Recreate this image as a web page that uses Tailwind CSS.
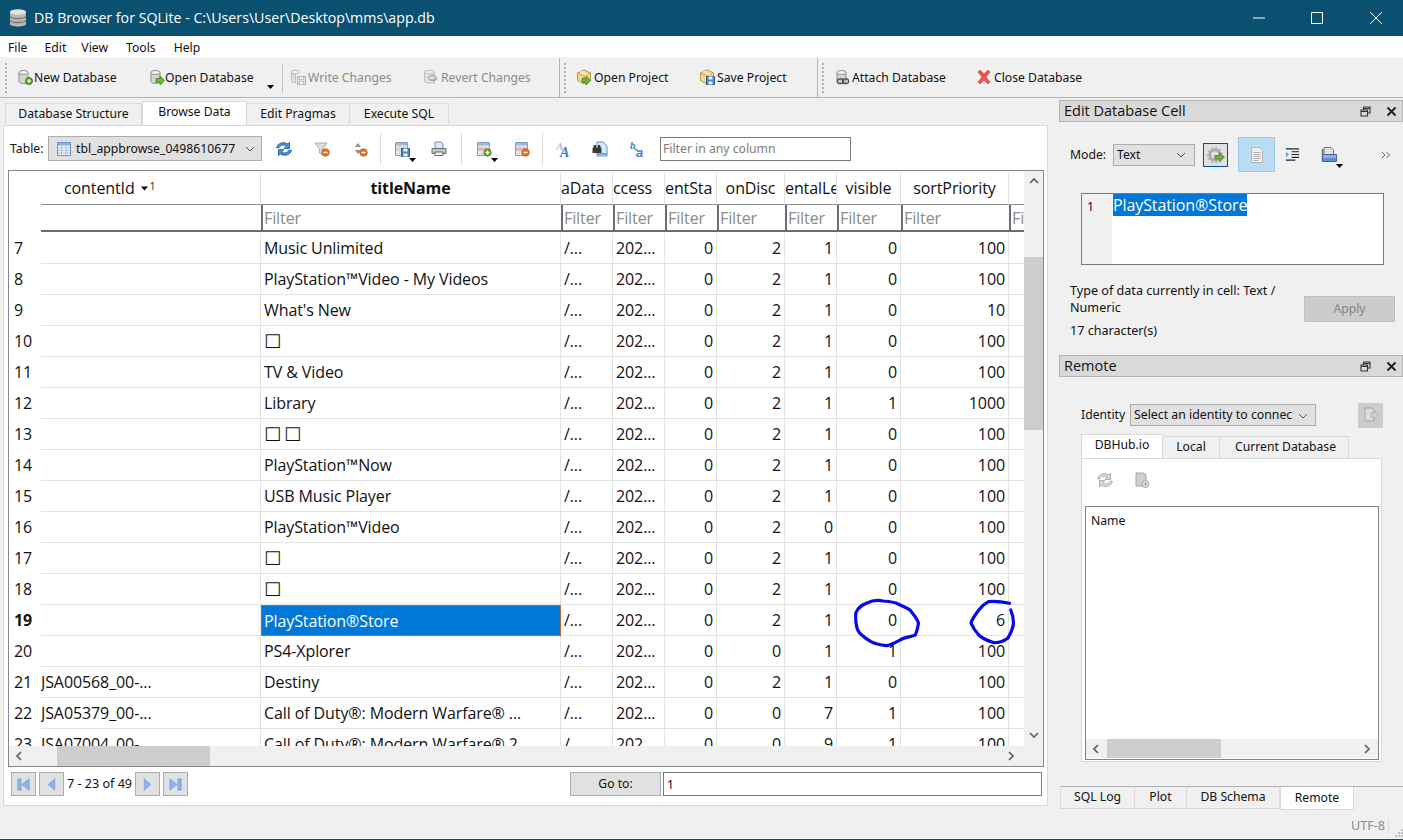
<!DOCTYPE html>
<html lang="en">
<head>
<meta charset="UTF-8">
<title>DB Browser for SQLite</title>
<script src="https://cdn.jsdelivr.net/npm/@tailwindcss/browser@4"></script>
</head>
<body class="bg-[#f0f0f0]">
<!-- shared icons -->
<svg class="hidden">
  <symbol id="db" viewBox="0 0 16 16"><path d="M2 3.5v9c0 1.2 2.2 2 4.5 2s4.500-.8 4.500-2v-9z" fill="#d4d4d4" stroke="#8d8d8d"/><ellipse cx="6.500" cy="3.500" rx="4.500" ry="2" fill="#f4f4f4" stroke="#8d8d8d"/></symbol>
  <symbol id="db-new" viewBox="0 0 16 16"><use href="#db"/><circle cx="12" cy="12" r="3.500" fill="#5ea52f" stroke="#3f7f1e"/><path d="M10 12h4M12 10v4" stroke="#fff" stroke-width="1.200"/></symbol>
  <symbol id="db-open" viewBox="0 0 16 16"><use href="#db"/><path d="M7 9.500h4V7l4.500 4.500L11 16v-2.500H7z" fill="#76b043" stroke="#3f7f1e" stroke-width=".8"/></symbol>
  <symbol id="db-write" viewBox="0 0 16 16"><path d="M1.500 3v9c0 1 1.800 1.800 4 1.800V3z" fill="#dedede" stroke="#bdbdbd"/><ellipse cx="5.500" cy="3" rx="4" ry="1.800" fill="#efefef" stroke="#bdbdbd"/><path d="M7.500 7.500h8v8h-8z" fill="#e2e2e2" stroke="#b0b0b0"/><path d="M9.500 7.500h4v3h-4zM9.500 12.500h4v3h-4z" fill="#f6f6f6" stroke="#b0b0b0" stroke-width=".7"/></symbol>
  <symbol id="db-revert" viewBox="0 0 16 16"><path d="M1.500 3v9c0 1 1.800 1.800 4 1.800h6V3z" fill="#e2e2e2" stroke="#bdbdbd"/><ellipse cx="6.500" cy="3" rx="5" ry="1.800" fill="#efefef" stroke="#bdbdbd"/><path d="M5 9c1-3 6-3 8-1M14 8.500c-1 3.500-6 3.500-8 1.500" fill="none" stroke="#a5a5a5" stroke-width="1.500"/></symbol>
  <symbol id="box" viewBox="0 0 16 16"><path d="M8 .8l6.500 3.200v7.500L8 15 1.500 11.500V4z" fill="#f5d98f" stroke="#c39a48"/><path d="M1.500 4L8 7.500 14.500 4M8 7.500V15" fill="none" stroke="#c39a48" stroke-width=".8"/><path d="M4.500 2.500l6.500 3.300" stroke="#fff2c8" stroke-width="1.500"/></symbol>
  <symbol id="proj-open" viewBox="0 0 16 16"><use href="#box"/><path d="M6 9.500h4V7l4.500 4.500L10 16v-2.500H6z" fill="#76b043" stroke="#3f7f1e" stroke-width=".8"/></symbol>
  <symbol id="proj-save" viewBox="0 0 16 16"><use href="#box"/><path d="M7.500 7.500h8v8h-8z" fill="#4f88c6" stroke="#2f5f95"/><path d="M9.500 7.500h4v3h-4zM9.500 12.500h4v3h-4z" fill="#f2f2f2"/></symbol>
  <symbol id="attach" viewBox="0 0 16 16"><use href="#db"/><rect x="2.500" y="10" width="6" height="4.500" rx="2" fill="none" stroke="#555" stroke-width="1.400"/><rect x="7.500" y="10" width="6" height="4.500" rx="2" fill="none" stroke="#555" stroke-width="1.400"/></symbol>
  <symbol id="close-x" viewBox="0 0 16 16"><path d="M2 3l2-2 4 4 4-4 2 2-4 5 4 5-2 2-4-4-4 4-2-2 4-5z" fill="#ef5350" stroke="#d93a36" stroke-width=".6"/></symbol>
  <symbol id="badge-minus" viewBox="0 0 16 16"><circle cx="11.500" cy="11.500" r="3.800" fill="#e8701f" stroke="#b94f10" stroke-width=".6"/><path d="M9.500 11.500h4" stroke="#fff" stroke-width="1.400"/></symbol>
  <symbol id="badge-plus" viewBox="0 0 16 16"><circle cx="11.500" cy="11.500" r="3.800" fill="#5ea52f" stroke="#3f7f1e" stroke-width=".6"/><path d="M9.500 11.500h4M11.500 9.500v4" stroke="#fff" stroke-width="1.300"/></symbol>
  <symbol id="grid-red" viewBox="0 0 16 16"><path d="M1.500 1.500h12v13h-12z" fill="#f4f7fb" stroke="#7f9dc4"/><path d="M2 2h11v2.500H2z" fill="#9cb9de"/><path d="M2 6.500h11v3H2z" fill="#f3a7a7"/><path d="M2 5h11M2 10h11M2 12.500h11M5.500 4v10M9.500 4v10" stroke="#b8c9de" stroke-width=".7"/></symbol>
  <symbol id="refresh" viewBox="1.500 2 13 12"><path d="M2 7c.5-3.500 5.500-5.500 9-3l1.500-1.500V7.500H8L10 5.500C7.500 4 5 5 4 7z" fill="#4b8fd8" stroke="#20609f" stroke-width=".7"/><path d="M14 9c-.5 3.500-5.500 5.500-9 3l-1.500 1.500V8.500H8L6 10.500C8.500 12 11 11 12 9z" fill="#4b8fd8" stroke="#20609f" stroke-width=".7"/></symbol>
  <symbol id="refresh-off" viewBox="1.500 2 13 12"><path d="M2 7c.5-3.500 5.500-5.500 9-3l1.500-1.500V7.500H8L10 5.500C7.500 4 5 5 4 7z" fill="#e0e0e0" stroke="#9d9d9d" stroke-width=".7"/><path d="M14 9c-.5 3.500-5.500 5.500-9 3l-1.500 1.500V8.500H8L6 10.500C8.500 12 11 11 12 9z" fill="#e0e0e0" stroke="#9d9d9d" stroke-width=".7"/></symbol>
  <symbol id="funnel" viewBox="0 0 16 16"><path d="M1 2h12L8.500 8v5.500L5.500 12V8z" fill="#dcdcdc" stroke="#adadad"/><use href="#badge-minus"/></symbol>
  <symbol id="sort-off" viewBox="0 0 16 16"><path d="M6 2L9 6H3zM6 13l3-4H3z" fill="#8c8c8c"/><use href="#badge-minus"/></symbol>
  <symbol id="save-table" viewBox="0 0 16 16"><use href="#grid-red"/><path d="M2 6.500h11v3H2z" fill="#cfe0c8"/><path d="M7.500 7.500h8v8h-8z" fill="#4f88c6" stroke="#2f5f95"/><path d="M9.500 7.500h4v3h-4zM9.500 12.500h4v3h-4z" fill="#f2f2f2"/></symbol>
  <symbol id="printer" viewBox="0 0 16 16"><path d="M4 1h6l2 2v5H4z" fill="#dbe8f7" stroke="#6f93c0"/><path d="M1 7.500h14v5H1z" fill="#c4c4c4" stroke="#6c6c6c"/><path d="M4 11h8v3.500H4z" fill="#f5f5f5" stroke="#6c6c6c"/></symbol>
  <symbol id="find-a" viewBox="0 0 16 16"><text x="0" y="9" font-size="11" font-weight="bold" font-style="italic" font-family="Liberation Serif" fill="#a5c2e6">A</text><text x="4" y="15.500" font-size="14" font-weight="bold" font-style="italic" font-family="Liberation Serif" fill="#3f7fd0">A</text></symbol>
  <symbol id="binoc" viewBox="0 0 16 16"><path d="M5 1h6l4 4v10H5z" fill="#dbe9f8" stroke="#5b92d2"/><path d="M5 13h10" stroke="#5b92d2" stroke-width="1.500"/><path d="M1 7l1-3h2l.5 3zM5.500 7L6 4h2l1 3zM.5 7h4.500v5H.500zM5 7h4.500v5H5z" fill="#3a3a3a"/></symbol>
  <symbol id="replace" viewBox="0 0 16 16"><text x="0" y="8" font-size="11" font-weight="bold" font-style="italic" font-family="Liberation Serif" fill="#3f7fd0">b</text><path d="M4 7l4 3" stroke="#5ea52f" stroke-width="1.500"/><text x="6" y="15.500" font-size="13" font-weight="bold" font-style="italic" font-family="Liberation Sans" fill="#3f7fd0">a</text></symbol>
  <symbol id="gear" viewBox="0 0 16 16"><circle cx="7" cy="8" r="4.500" fill="none" stroke="#a8a8a8" stroke-width="2.500"/><circle cx="7" cy="8" r="6.300" fill="none" stroke="#b4b4b4" stroke-width="1.800" stroke-dasharray="2 1.700"/><path d="M7 8.500h4V6l4.500 4L11 14v-2.500H7z" fill="#76b043" stroke="#3f7f1e" stroke-width=".7"/></symbol>
  <symbol id="doc" viewBox="0 0 16 16"><path d="M2.500.5h8l3 3v12h-11z" fill="#f0f0f0" stroke="#b5b5b5"/><path d="M4.500 5.500h7M4.500 7.500h7M4.500 9.500h7M4.500 11.500h7M4.500 13.500h5" stroke="#b0b0b0"/></symbol>
  <symbol id="indent" viewBox="0 0 16 16"><path d="M1 2h14M7 5h8M7 8h8M7 11h8M1 14h10" stroke="#222" stroke-width="1.200"/><path d="M1 5l3.500 3L1 11z" fill="#6ea6e0"/></symbol>
  <symbol id="blob" viewBox="0 0 16 16"><path d="M3 .5h7l2.500 2.500v5H3z" fill="#e2e2e2" stroke="#777"/><path d="M1.500 2v12.500" stroke="#666" stroke-width="1.400"/><path d="M1.500 7.500h14v7h-14z" fill="#5d8fcb" stroke="#3a689f"/><path d="M2 8h13v3H2z" fill="#8bb1de"/></symbol>
  <symbol id="send-off" viewBox="0 0 16 16"><path d="M2 1h7l2 2v11H2z" fill="#dcdcdc" stroke="#a5a5a5"/><path d="M8 6h3V4l4 4-4 4v-2H8z" fill="#d0d0d0" stroke="#a0a0a0" stroke-width=".7"/></symbol>
  <symbol id="db-add-off" viewBox="0 0 16 16"><path d="M2 1h8l2 2v11H2z" fill="#cfcfcf" stroke="#a5a5a5"/><circle cx="11.500" cy="12" r="3.500" fill="#e8e8e8" stroke="#a5a5a5"/><path d="M9.500 12h4M11.500 10v4" stroke="#9a9a9a"/></symbol>
  <symbol id="table-ico" viewBox="0 0 16 16"><path d="M1.500 1.500h13v13h-13z" fill="#eef4fb" stroke="#6a95c8"/><path d="M2 2h12v2.500H2z" fill="#8fb3de"/><path d="M2 7h12M2 9.500h12M2 12h12M5.500 4.500v10M10 4.500v10" stroke="#9dbbdc" stroke-width=".8"/></symbol>
  <symbol id="arrow-down" viewBox="0 0 7 4"><path d="M0 0h7L3.500 4z" fill="#000"/></symbol>
  <symbol id="nav-first" viewBox="0 0 16 16"><path d="M1 1h4v14H1z" fill="#8db6ea" stroke="#5a8fd4" stroke-width=".7"/><path d="M15 1v14L6 8z" fill="#8db6ea" stroke="#5a8fd4" stroke-width=".7"/></symbol>
  <symbol id="nav-prev" viewBox="0 0 16 16"><path d="M12 1v14L4 8z" fill="#8db6ea" stroke="#5a8fd4" stroke-width=".7"/></symbol>
  <symbol id="nav-next" viewBox="0 0 16 16"><path d="M4 1v14l8-7z" fill="#8db6ea" stroke="#5a8fd4" stroke-width=".7"/></symbol>
  <symbol id="nav-last" viewBox="0 0 16 16"><path d="M11 1h4v14h-4z" fill="#8db6ea" stroke="#5a8fd4" stroke-width=".7"/><path d="M1 1v14l9-7z" fill="#8db6ea" stroke="#5a8fd4" stroke-width=".7"/></symbol>
  <symbol id="chev-l" viewBox="0 0 10 10"><path d="M7 1L3 5l4 4" fill="none" stroke="#606060" stroke-width="1.700"/></symbol>
  <symbol id="chev-r" viewBox="0 0 10 10"><path d="M3 1l4 4-4 4" fill="none" stroke="#606060" stroke-width="1.700"/></symbol>
  <symbol id="chev-u" viewBox="0 0 10 10"><path d="M1 7l4-4 4 4" fill="none" stroke="#606060" stroke-width="1.700"/></symbol>
  <symbol id="chev-d" viewBox="0 0 10 10"><path d="M1 3l4 4 4-4" fill="none" stroke="#606060" stroke-width="1.700"/></symbol>
  <symbol id="combo-v" viewBox="0 0 10 6"><path d="M1 1l4 4 4-4" fill="none" stroke="#555" stroke-width="1"/></symbol>
  <symbol id="more" viewBox="0 0 10 8"><path d="M1 1l3 3-3 3M5.500 1l3 3-3 3" fill="none" stroke="#666" stroke-width="1"/></symbol>
  <symbol id="float" viewBox="0 0 11 11"><path d="M3.500 1h6.500v6H8M1 4h6.500v6H1zM1 5.500h6.500M3.500 1v3M3.500 2.500H10" fill="none" stroke="#333" stroke-width="1.100"/></symbol>
  <symbol id="dock-x" viewBox="0 0 11 11"><path d="M1.500 1.500l8 8M9.500 1.500l-8 8" stroke="#222" stroke-width="1.900"/></symbol>
</svg>

<div class="relative w-[1403px] h-[840px] overflow-hidden flex flex-col bg-[#f0f0f0] text-[12.2px] text-[#111] font-['Noto_Sans',sans-serif]">

  <!-- title bar -->
  <div class="h-9 shrink-0 bg-[#0a5070] flex items-center text-white">
    <svg class="w-[20px] h-[20px] ml-[8px]" viewBox="0 0 20 20"><path d="M2 4v12c0 1.500 3.500 2.500 8 2.500s8-1 8-2.500V4z" fill="#b9b9b9"/><ellipse cx="10" cy="4" rx="8" ry="2.700" fill="#e3e3e3"/><path d="M2 8c0 1.500 3.500 2.500 8 2.500S18 9.500 18 8M2 12c0 1.500 3.500 2.500 8 2.500s8-1 8-2.500" fill="none" stroke="#777" stroke-width="1.300"/></svg>
    <span class="ml-[6px] text-[14.2px] font-['Open_Sans',sans-serif]">DB Browser for SQLite - C:\Users\User\Desktop\mms\app.db</span>
    <div class="ml-auto flex items-center -mr-[2px]">
      <div class="w-[58px] flex justify-center"><svg class="w-[12px] h-[12px]" viewBox="0 0 12 12"><path d="M0 6h12" stroke="#fff"/></svg></div>
      <div class="w-[58px] flex justify-center"><svg class="w-[12px] h-[12px]" viewBox="0 0 12 12"><path d="M.5.5h11v11H.5z" fill="none" stroke="#fff"/></svg></div>
      <div class="w-[58px] ml-[1px] flex justify-center"><svg class="w-[12px] h-[12px]" viewBox="0 0 12 12"><path d="M0 0l12 12M12 0L0 12" stroke="#fff"/></svg></div>
    </div>
  </div>

  <!-- menu -->
  <div class="h-[22px] shrink-0 bg-white flex items-center pl-[8px] gap-[17px] pt-[3px] border-b border-[#f4f4f4]">
    <span>File</span><span>Edit</span><span class="-ml-[2px]">View</span><span class="ml-[1px]">Tools</span><span class="ml-[1px]">Help</span>
  </div>

  <!-- main toolbar -->
  <div class="h-[40px] shrink-0 flex items-center border-b border-[#b4b4b4]">
    <div class="w-[5px]"></div>
    <div class="h-[30px] w-[2px] border-l-2 border-dotted border-[#b0b0b0]"></div>
    <div class="w-[10px]"></div>
    <div class="w-[132px] flex items-center gap-[1px]"><svg class="w-4 h-4"><use href="#db-new"/></svg><span class="pt-[2px]">New Database</span></div>
    <div class="relative w-[133px] flex items-center"><svg class="w-4 h-4"><use href="#db-open"/></svg><span class="pt-[2px]">Open Database</span><svg class="absolute left-[118px] top-[18px] w-[7px] h-[4px]"><use href="#arrow-down"/></svg></div>
    <div class="w-[1px] h-[30px] bg-[#c4c4c4] mr-[7px]"></div>
    <div class="w-[133px] flex items-center gap-[2px] text-[#8b8b8b]"><svg class="w-4 h-4"><use href="#db-write"/></svg><span class="pt-[2px]">Write Changes</span></div>
    <div class="w-[136px] flex items-center gap-[2px] text-[#8b8b8b]"><svg class="w-4 h-4"><use href="#db-revert"/></svg><span class="pt-[2px]">Revert Changes</span></div>
    <div class="w-[1px] h-full bg-[#b4b4b4]"></div>
    <div class="ml-[4px] h-[30px] w-[2px] border-l-2 border-dotted border-[#b0b0b0]"></div>
    <div class="w-[10px]"></div>
    <div class="w-[123px] flex items-center gap-[2px]"><svg class="w-4 h-4"><use href="#proj-open"/></svg><span class="pt-[2px]">Open Project</span></div>
    <div class="w-[118px] flex items-center gap-[2px]"><svg class="w-4 h-4"><use href="#proj-save"/></svg><span class="pt-[2px]">Save Project</span></div>
    <div class="w-[1px] h-full bg-[#b4b4b4]"></div>
    <div class="ml-[4px] h-[30px] w-[2px] border-l-2 border-dotted border-[#b0b0b0]"></div>
    <div class="w-[11px]"></div>
    <div class="w-[141px] flex items-center gap-[1px]"><svg class="w-4 h-4"><use href="#attach"/></svg><span class="pt-[2px]">Attach Database</span></div>
    <div class="flex items-center gap-[2px]"><svg class="w-4 h-4"><use href="#close-x"/></svg><span class="pt-[2px]">Close Database</span></div>
  </div>

  <div class="flex-1 flex min-h-0">
    <!-- left: tabs and browse pane -->
    <div class="w-[1059px] shrink-0 flex flex-col pl-[3px]">
      <div class="h-[27px] shrink-0 flex items-end pl-[2px]">
        <div class="w-[137px] h-[22px] flex items-center justify-center border border-b-0 border-[#d9d9d9]">Database Structure</div>
        <div class="w-[105px] h-[24px] flex items-center justify-center bg-white border border-b-0 border-[#d9d9d9] pb-[3px]">Browse Data</div>
        <div class="w-[103px] h-[22px] flex items-center justify-center border border-b-0 border-l-0 border-[#d9d9d9]">Edit Pragmas</div>
        <div class="w-[99px] h-[22px] flex items-center justify-center border border-b-0 border-l-0 border-[#d9d9d9]">Execute SQL</div>
      </div>
      <div class="w-[1045px] h-[681px] bg-white border border-[#d9d9d9] flex flex-col pl-[4px]">
        <!-- table toolbar -->
        <div class="h-[44px] shrink-0 flex items-center pl-[2px] pt-[1px]">
          <span class="w-[38px] pt-[1px]">Table:</span>
          <div class="w-[214px] h-[25px] bg-[#e1e1e1] border border-[#adadad] flex items-center pl-[7px] gap-[4px]">
            <svg class="w-4 h-4 shrink-0"><use href="#table-ico"/></svg><span class="pt-[1px]">tbl_appbrowse_0498610677</span>
            <svg class="w-[10px] h-[6px] ml-auto mr-[6px]"><use href="#combo-v"/></svg>
          </div>
          <svg class="w-4 h-4 ml-[14px]"><use href="#refresh"/></svg>
          <svg class="w-4 h-4 ml-[22px]"><use href="#funnel"/></svg>
          <svg class="w-4 h-4 ml-[22px]"><use href="#sort-off"/></svg>
          <div class="w-[1px] h-[32px] bg-[#d9d9d9] ml-[12px]"></div>
          <div class="relative ml-[13px] w-4 h-4"><svg class="w-4 h-4"><use href="#save-table"/></svg><svg class="absolute left-[15px] top-[17px] w-[7px] h-[4px]"><use href="#arrow-down"/></svg></div>
          <svg class="w-4 h-4 ml-[21px]"><use href="#printer"/></svg>
          <div class="w-[1px] h-[32px] bg-[#d9d9d9] ml-[14px]"></div>
          <div class="relative ml-[14px] w-4 h-4"><svg class="w-4 h-4"><use href="#grid-red"/></svg><svg class="absolute left-0 top-0 w-4 h-4"><use href="#badge-plus"/></svg><svg class="absolute left-[15px] top-[17px] w-[7px] h-[4px]"><use href="#arrow-down"/></svg></div>
          <div class="relative ml-[22px] w-4 h-4"><svg class="w-4 h-4"><use href="#grid-red"/></svg><svg class="absolute left-0 top-0 w-4 h-4"><use href="#badge-minus"/></svg></div>
          <div class="w-[1px] h-[32px] bg-[#d9d9d9] ml-[12px]"></div>
          <svg class="w-4 h-4 ml-[13px]"><use href="#find-a"/></svg>
          <svg class="w-4 h-4 ml-[20px]"><use href="#binoc"/></svg>
          <svg class="w-4 h-4 ml-[22px]"><use href="#replace"/></svg>
          <div class="ml-[14px] w-[191px] h-[24px] border border-[#7a7a7a] flex items-center pl-[2px] pt-[2px] text-[#7c7c7c]">Filter in any column</div>
        </div>

        <!-- data table -->
        <div class="w-[1036px] h-[597px] border border-[#828790] flex flex-col font-['Open_Sans',sans-serif] text-[16px] tracking-[-0.1px]">
          <div class="h-[575px] flex">
            <div class="w-[1015px] overflow-hidden bg-white">
              <div class="h-[34px] pt-[1px] grid grid-cols-[32px_220px_300px_52px_52px_52px_68px_52px_64px_108px_15px] [&>div]:border-r [&>div]:border-[#e3e3e3] [&>div]:flex [&>div]:items-center [&>div]:justify-center [&>div]:overflow-hidden [&>div]:whitespace-nowrap">
                <div class="!border-r-0"></div>
                <div class="border-b !border-b-[#8c8c8c] relative !justify-start pl-[23px]">contentId<svg class="w-[7px] h-[5px] ml-[6px]"><use href="#arrow-down"/></svg><span class="ml-[2px] -mt-[3px] text-[10px]">1</span></div>
                <div class="border-b !border-b-[#8c8c8c] font-bold">titleName</div>
                <div class="border-b !border-b-[#8c8c8c] !justify-start">aData</div>
                <div class="border-b !border-b-[#8c8c8c] !justify-start">ccess</div>
                <div class="border-b !border-b-[#8c8c8c] !justify-start">entSta</div>
                <div class="border-b !border-b-[#8c8c8c]">onDisc</div>
                <div class="border-b !border-b-[#8c8c8c] !justify-start">entalLe</div>
                <div class="border-b !border-b-[#8c8c8c]">visible</div>
                <div class="border-b !border-b-[#8c8c8c]">sortPriority</div>
                <div class="border-b !border-b-[#8c8c8c] !border-r-0"></div>
              </div>
              <div class="h-[28px] grid grid-cols-[32px_220px_300px_52px_52px_52px_68px_52px_64px_108px_15px] [&>span]:h-[27px] [&>span]:border-l-2 [&>span]:border-b-2 [&>span]:border-[#6d6d6d] [&>span]:text-[#8a8a8a] [&>span]:pl-[1px] [&>span]:overflow-hidden [&>span]:leading-[26px]">
                <div></div>
                <div class="h-[27px] border-b-2 border-[#6d6d6d]"></div>
                <span>Filter</span><span>Filter</span><span>Filter</span><span>Filter</span><span>Filter</span><span>Filter</span><span>Filter</span><span>Filter</span><span>Filter</span>
              </div>
              <div id="rows"></div>
            </div>
            <!-- vertical scrollbar -->
            <div class="w-[19px] flex flex-col items-stretch bg-[#f0f0f0]">
              <div class="h-[20px] flex items-center justify-center"><svg class="w-[10px] h-[10px]"><use href="#chev-u"/></svg></div>
              <div class="h-[66px]"></div>
              <div class="h-[173px] bg-[#cdcdcd]"></div>
              <div class="flex-1"></div>
              <div class="h-[22px] flex items-center justify-center"><svg class="w-[10px] h-[10px]"><use href="#chev-d"/></svg></div>
            </div>
          </div>
          <!-- horizontal scrollbar -->
          <div class="h-[20px] flex items-stretch bg-[#f0f0f0]">
            <div class="w-[48px] flex items-center pl-[5px]"><svg class="w-[10px] h-[10px]"><use href="#chev-l"/></svg></div>
            <div class="w-[153px] bg-[#cdcdcd]"></div>
            <div class="flex-1"></div>
            <div class="w-[35px] flex items-center"><svg class="w-[10px] h-[10px] ml-[-2px]"><use href="#chev-r"/></svg></div>
          </div>
        </div>

        <!-- record navigation -->
        <div class="h-[24px] mt-[5px] flex items-center pl-[3px]">
          <div class="w-[25px] h-[24px] bg-[#e1e1e1] border border-[#adadad] flex items-center justify-center"><svg class="w-[13px] h-[13px]"><use href="#nav-first"/></svg></div>
          <div class="ml-[3px] w-[25px] h-[24px] bg-[#e1e1e1] border border-[#adadad] flex items-center justify-center"><svg class="w-[13px] h-[13px]"><use href="#nav-prev"/></svg></div>
          <span class="w-[71px] text-center text-[12.6px] pt-[1px]">7 - 23 of 49</span>
          <div class="w-[25px] h-[24px] bg-[#e1e1e1] border border-[#adadad] flex items-center justify-center"><svg class="w-[13px] h-[13px]"><use href="#nav-next"/></svg></div>
          <div class="ml-[3px] w-[25px] h-[24px] bg-[#e1e1e1] border border-[#adadad] flex items-center justify-center"><svg class="w-[13px] h-[13px]"><use href="#nav-last"/></svg></div>
          <div class="ml-[382px] w-[91px] h-[24px] bg-[#e1e1e1] border border-[#adadad] flex items-center justify-center pt-[1px]">Go to:</div>
          <div class="ml-[2px] w-[379px] h-[24px] border border-[#7a7a7a] pl-[3px] leading-[23px]">1</div>
        </div>
      </div>
    </div>

    <!-- right docks -->
    <div class="w-[344px] shrink-0 flex flex-col">
      <!-- edit cell dock -->
      <div class="h-[22px] mt-[2px] bg-[#d9d9d9] border border-[#b4b4b4] flex items-center pl-[4px] text-[14.5px] font-['Open_Sans',sans-serif]">
        Edit Database Cell
        <svg class="w-[11px] h-[11px] ml-auto"><use href="#float"/></svg><svg class="w-[11px] h-[11px] ml-[15px] mr-[5px]"><use href="#dock-x"/></svg>
      </div>
      <div class="h-[60px] flex items-start pl-[11px]">
        <div class="flex items-center mt-[15px]">
          <span class="w-[43px] pt-[1px]">Mode:</span>
          <div class="w-[82px] h-[22px] bg-[#e1e1e1] border border-[#adadad] flex items-center pl-[3px] pt-[1px]">Text<svg class="w-[10px] h-[6px] ml-auto mr-[8px]"><use href="#combo-v"/></svg></div>
          <div class="ml-[8px] w-[25px] h-[24px] bg-[#e1e1e1] border border-[#005499] flex items-center justify-center"><svg class="w-[18px] h-[18px]"><use href="#gear"/></svg></div>
          <div class="ml-[10px] w-[37px] h-[35px] bg-[#bcdcf4] border border-[#99ccf0] flex items-center justify-center"><svg class="w-4 h-4"><use href="#doc"/></svg></div>
          <svg class="w-[15px] h-[15px] ml-[10px]"><use href="#indent"/></svg>
          <div class="relative ml-[21px] w-4 h-4"><svg class="w-4 h-4"><use href="#blob"/></svg><svg class="absolute left-[15px] top-[17px] w-[7px] h-[4px]"><use href="#arrow-down"/></svg></div>
          <svg class="ml-[44px] w-[10px] h-[8px]"><use href="#more"/></svg>
        </div>
      </div>
      <div class="ml-[22px] w-[303px] h-[72px] border border-[#7a7a7a] bg-white flex mt-[11px] font-['Open_Sans',sans-serif] text-[16px] tracking-[-0.1px]">
        <div class="w-[30px] bg-[#f0f0f0] pl-[5px] pt-[4px] text-[12.2px] font-['Noto_Sans',sans-serif]">1</div>
        <div class="pl-[1px]"><span class="block bg-[#0078d7] text-white h-[22px] leading-[22px]">PlayStation®Store</span></div>
      </div>
      <div class="flex pl-[11px] mt-[17px]">
        <div class="w-[234px] leading-[17px] text-[12.6px]">Type of data currently in cell: Text / Numeric<div class="mt-[6px]">17 character(s)</div></div>
        <div class="mt-[14px] w-[91px] h-[26px] bg-[#cccccc] border border-[#bfbfbf] text-[#838383] flex items-center justify-center">Apply</div>
      </div>

      <!-- remote dock -->
      <div class="h-[22px] mt-[16px] bg-[#d9d9d9] border border-[#b4b4b4] flex items-center pl-[4px] text-[14.5px] font-['Open_Sans',sans-serif]">
        Remote
        <svg class="w-[11px] h-[11px] ml-auto"><use href="#float"/></svg><svg class="w-[11px] h-[11px] ml-[15px] mr-[5px]"><use href="#dock-x"/></svg>
      </div>
      <div class="flex items-center h-[26px] mt-[25px] pl-[22px]">
        <span class="w-[49px] pt-[1px]">Identity</span>
        <div class="w-[186px] h-[22px] bg-[#e1e1e1] border border-[#adadad] flex items-center pl-[3px] pt-[1px] whitespace-nowrap overflow-hidden text-[12.3px]">Select an identity to connec<svg class="w-[10px] h-[6px] ml-auto mr-[7px] shrink-0"><use href="#combo-v"/></svg></div>
        <div class="ml-[42px] w-[25px] h-[25px] bg-[#cccccc] flex items-center justify-center"><svg class="w-4 h-4"><use href="#send-off"/></svg></div>
      </div>
      <div class="ml-[22px] mt-[6px] h-[24px] flex items-end">
        <div class="w-[82px] h-[24px] bg-white border border-b-0 border-[#d9d9d9] flex items-center justify-center pb-[2px]">DBHub.io</div>
        <div class="w-[57px] h-[22px] border border-b-0 border-l-0 border-[#d9d9d9] flex items-center justify-center">Local</div>
        <div class="w-[129px] h-[22px] border border-b-0 border-l-0 border-[#d9d9d9] flex items-center justify-center pl-[3px]">Current Database</div>
      </div>
      <div class="ml-[22px] w-[301px] h-[304px] bg-white border border-[#d9d9d9] px-[3px] flex flex-col">
        <div class="h-[47px] flex items-center pl-[12px] pb-[5px]"><svg class="w-4 h-4"><use href="#refresh-off"/></svg><svg class="w-4 h-4 ml-[21px]"><use href="#db-add-off"/></svg></div>
        <div class="w-[294px] h-[254px] border border-[#828282] flex flex-col">
          <div class="flex-1 pl-[5px] pt-[5px]">Name</div>
          <div class="h-[19px] mb-[1px] flex items-stretch bg-[#f0f0f0]">
            <div class="w-[21px] flex items-center pl-[5px]"><svg class="w-[10px] h-[10px]"><use href="#chev-l"/></svg></div>
            <div class="w-[114px] bg-[#cdcdcd]"></div>
            <div class="flex-1"></div>
            <div class="w-[21px] flex items-center pl-[5px]"><svg class="w-[10px] h-[10px]"><use href="#chev-r"/></svg></div>
          </div>
        </div>
      </div>
      <div class="mt-[24px] ml-[1px] h-[23px] flex border-t border-[#b4b4b4]">
        <div class="w-[75px] h-[22px] border-x border-b border-[#d9d9d9] flex items-center justify-center">SQL Log</div>
        <div class="w-[52px] h-[22px] border-r border-b border-[#d9d9d9] flex items-center justify-center">Plot</div>
        <div class="w-[93px] h-[22px] border-r border-b border-[#d9d9d9] flex items-center justify-center">DB Schema</div>
        <div class="w-[74px] h-[23px] bg-white border-x border-b border-[#d9d9d9] flex items-center justify-center">Remote</div>
      </div>
    </div>
  </div>

  <!-- status bar -->
  <div class="absolute left-0 right-0 bottom-0 h-[1px] bg-[#0a5070]"></div>
  <div class="absolute right-[14px] bottom-[6px] text-[#8a8a8a] text-[12.6px] pr-[3px] border-r border-[#dcdcdc] leading-[17px]">UTF-8</div>
  <svg class="absolute right-0 bottom-[1px] w-[11px] h-[11px]" viewBox="0 0 11 11"><path d="M9 1h2v2H9zM6 4h2v2H6zM9 4h2v2H9zM3 7h2v2H3zM6 7h2v2H6zM9 7h2v2H9z" fill="#c0c0c0"/></svg>

  <!-- hand drawn circles on top of the screenshot -->
  <svg class="absolute left-0 top-0 w-[1403px] h-[840px] pointer-events-none" viewBox="0 0 1403 840">
    <g fill="none" stroke="#0808e6" stroke-width="3.200" stroke-linejoin="round" stroke-linecap="round">
      <path d="M855.800 613C858 607 862 605 867 603C873 600 878 600 883 601C888 601 892 602 896 603C902 606 906 607 910 610C914 615 917 618 918.500 623C918 628 917 631 915.400 635C910 637 906 637 902 639C896 642 891 645 886.500 645.700C880 645 875 644 871 641.700C865 638 860 635 857.700 630C855.800 625 855.500 618 855.800 613Z"/>
      <path d="M1009.600 603.300C1003 602 995 601 988.500 601.700C984 604 981 607 978.800 610C975 615 972 619 971 623C973 628 976 632 978.800 635C983 639 988 641 994 642.700C999 643 1004 641 1007.700 638.300C1011 633 1013 628 1013.500 623C1013.500 618 1012 613 1010.800 610"/>
    </g>
  </svg>
</div>

<script>
  const data = [
    [7, "", "Music Unlimited", 0, 2, 1, 0, 100],
    [8, "", "PlayStation™Video - My Videos", 0, 2, 1, 0, 100],
    [9, "", "What's New", 0, 2, 1, 0, 10],
    [10, "", "□", 0, 2, 1, 0, 100],
    [11, "", "TV & Video", 0, 2, 1, 0, 100],
    [12, "", "Library", 0, 2, 1, 1, 1000],
    [13, "", "□□", 0, 2, 1, 0, 100],
    [14, "", "PlayStation™Now", 0, 2, 1, 0, 100],
    [15, "", "USB Music Player", 0, 2, 1, 0, 100],
    [16, "", "PlayStation™Video", 0, 2, 0, 0, 100],
    [17, "", "□", 0, 2, 1, 0, 100],
    [18, "", "□", 0, 2, 1, 0, 100],
    [19, "", "PlayStation®Store", 0, 2, 1, 0, 6],
    [20, "", "PS4-Xplorer", 0, 0, 1, 1, 100],
    [21, "JSA00568_00-...", "Destiny", 0, 2, 1, 0, 100],
    [22, "JSA05379_00-...", "Call of Duty®: Modern Warfare® ...", 0, 0, 7, 1, 100],
    [23, "JSA07004_00-...", "Call of Duty®: Modern Warfare® 2...", 0, 0, 9, 1, 100]
  ];
  const cell = "border-r border-b border-[#e3e3e3] overflow-hidden whitespace-nowrap";
  const num = (v) => `<div class="${cell} text-right pr-[3px]">${v}</div>`;
  document.getElementById("rows").innerHTML = data.map((r) => {
    const selected = r[0] === 19;
    const boxes = r[2].includes("□");
    const title = selected
      ? `<div class="bg-[#0078d7] text-white pl-[2px] border border-[#c8641e] overflow-hidden whitespace-nowrap">${r[2]}</div>`
      : `<div class="${cell} pl-[3px] ${boxes ? "font-['DejaVu_Sans',sans-serif] text-[18px] tracking-[3px] leading-[28px]" : ""}">${r[2]}</div>`;
    return `<div class="h-[31px] leading-[31px] grid grid-cols-[32px_220px_300px_52px_52px_52px_68px_52px_64px_108px_15px]">
      <div class="pl-[5px] ${selected ? "font-bold" : ""}">${r[0]}</div>
      <div class="${cell}">${r[1]}</div>
      ${title}
      <div class="${cell} pl-[3px]">/...</div>
      <div class="${cell} pl-[3px]">202...</div>
      ${num(r[3])}${num(r[4])}${num(r[5])}${num(r[6])}${num(r[7])}
      <div class="border-b border-[#e3e3e3]"></div>
    </div>`;
  }).join("");
</script>
</body>
</html>
